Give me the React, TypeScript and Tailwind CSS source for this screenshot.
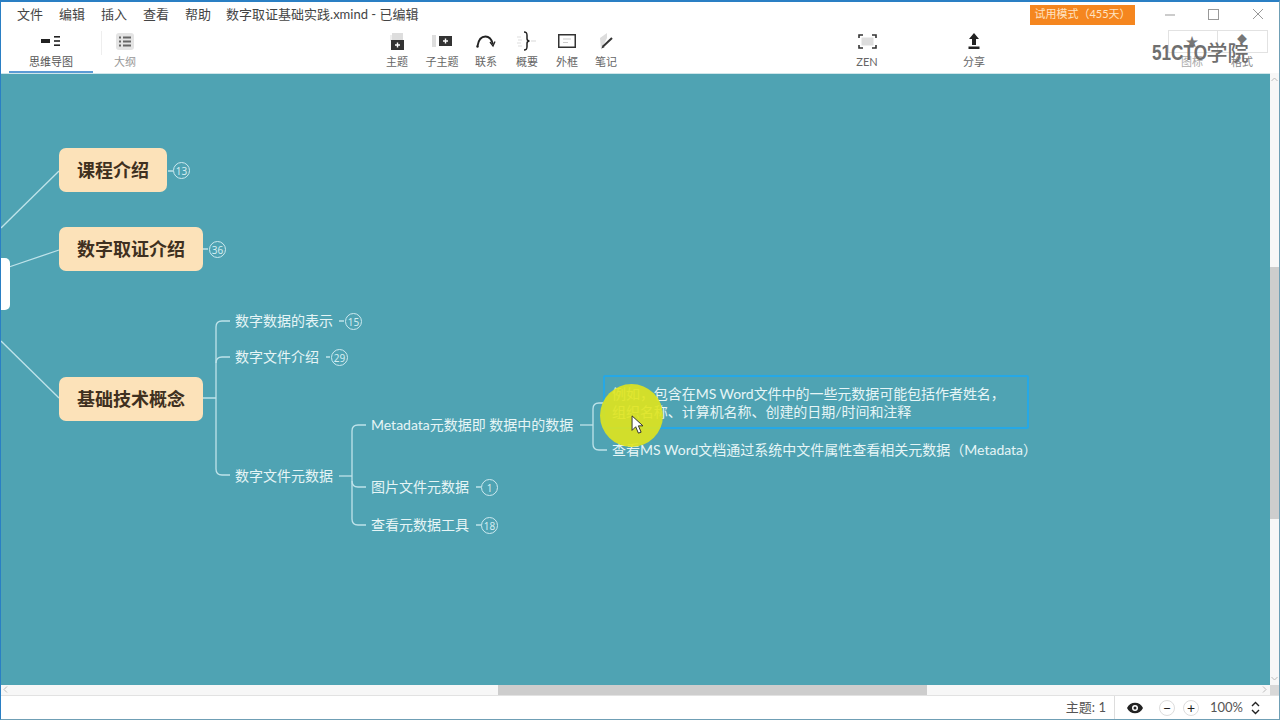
const cjk = "font-['Lato','Noto_Sans_CJK_SC',sans-serif]";

function MindMapIcon() {
  return (
    <svg width="22" height="14" viewBox="0 0 22 14" fill="#222">
      <rect x="1" y="5" width="9" height="4" />
      <rect x="14" y="2" width="6" height="1.6" />
      <rect x="14" y="6.200" width="6" height="1.6" />
      <rect x="14" y="10.400" width="6" height="1.6" />
    </svg>
  );
}

function OutlineIcon() {
  return (
    <svg width="18" height="17" viewBox="0 0 18 17">
      <rect x="0" y="0" width="18" height="17" rx="3" fill="#e4e4e4" />
      <g fill="#666">
        <rect x="3" y="3.500" width="2" height="2" />
        <rect x="7" y="3.500" width="8" height="2" />
        <rect x="3" y="7.500" width="2" height="2" />
        <rect x="7" y="7.500" width="8" height="2" />
        <rect x="3" y="11.500" width="2" height="2" />
        <rect x="7" y="11.500" width="8" height="2" />
      </g>
    </svg>
  );
}

function TopicIcon() {
  return (
    <svg width="14" height="17" viewBox="0 0 14 17">
      <path d="M2 0h11v8H2z" fill="#ddd" />
      <path d="M0 2h2v6H0z" fill="#eee" />
      <rect x="1" y="7" width="13" height="10" fill="#333" />
      <path d="M7.500 9.500v5M5 12h5" stroke="#fff" strokeWidth="1.400" />
    </svg>
  );
}

function SubTopicIcon() {
  return (
    <svg width="20" height="12" viewBox="0 0 20 12">
      <rect x="0" y="0" width="4" height="12" fill="#ddd" />
      <rect x="7" y="1" width="13" height="10" fill="#333" />
      <path d="M13.500 3.500v5M11 6h5" stroke="#fff" strokeWidth="1.400" />
    </svg>
  );
}

function RelationIcon() {
  return (
    <svg width="20" height="13" viewBox="0 0 20 13" fill="none">
      <path d="M1.500 11C2.500 4.500 6 1.500 9.500 1.500s6 2.500 7.500 7.500" stroke="#222" strokeWidth="1.800" />
      <path d="M14 7l3 4 2-4.500" stroke="#222" strokeWidth="1.300" />
      <circle cx="1.500" cy="11.500" r="1.200" fill="#222" />
    </svg>
  );
}

function SummaryIcon() {
  return (
    <svg width="20" height="20" viewBox="0 0 20 20" fill="none">
      <path d="M0 6h4M1 9h4M0 12h4M1 15h4" stroke="#ddd" strokeWidth="1.200" />
      <path d="M7 1c3 0 3 1.500 3 3.500v3c0 1.500 1 2.500 2.500 2.500-1.500 0-2.500 1-2.500 2.500v3c0 2 0 3.500-3 3.500" stroke="#222" strokeWidth="1.500" />
      <path d="M14 10h5" stroke="#ddd" strokeWidth="1.200" />
    </svg>
  );
}

function BoundaryIcon() {
  return (
    <svg width="18" height="14" viewBox="0 0 18 14" fill="none">
      <rect x="0.750" y="0.750" width="16.500" height="12.500" stroke="#333" strokeWidth="1.500" />
      <path d="M5 5h8M5 8.500h5" stroke="#ccc" strokeWidth="1.100" />
    </svg>
  );
}

function NoteIcon() {
  return (
    <svg width="15" height="17" viewBox="0 0 15 17">
      <path d="M1 5l7-5v5L2 17z" fill="#ddd" />
      <path d="M4 13.500L13 5" stroke="#333" strokeWidth="2" />
      <path d="M2.500 15.500l1-3 2 1.800z" fill="#333" />
    </svg>
  );
}

function ZenIcon() {
  return (
    <svg width="19" height="15" viewBox="0 0 19 15" fill="none">
      <rect x="3.500" y="3.500" width="12" height="8" fill="#ddd" />
      <path d="M1 4V1h4M14 1h4v3M1 11v3h4M14 14h4v-3" stroke="#333" strokeWidth="1.600" />
    </svg>
  );
}

function ShareIcon() {
  return (
    <svg width="12" height="16" viewBox="0 0 12 16">
      <path d="M6 0l5 6H8v6H4V6H1z" fill="#222" />
      <rect x="0.500" y="13.500" width="11" height="2.500" fill="#222" />
    </svg>
  );
}

function Chevron({ d, className }: { d: string; className: string }) {
  return (
    <svg className={`absolute ${className}`} width="7" height="7" viewBox="0 0 7 7" fill="none" stroke="#bbb" strokeWidth="1">
      <path d={d} />
    </svg>
  );
}

function ToolButton({ icon, label, className }: { icon: React.ReactNode; label: string; className: string }) {
  return (
    <div className={`flex flex-col items-center pt-[1px] ${className}`}>
      <div className="flex h-[22px] items-center justify-center">{icon}</div>
      <span className="mt-[3px] text-[11px] leading-[14px]">{label}</span>
    </div>
  );
}

function Count({ n, className }: { n: number; className: string }) {
  return (
    <div className={`absolute flex h-[17px] w-[17px] items-center justify-center rounded-full border border-[#cdeaf0] font-['Noto_Sans',sans-serif] text-[10px] leading-none text-[#d6eef2] ${className}`}>
      {n}
    </div>
  );
}

function MainTopic({ label, className }: { label: string; className: string }) {
  return (
    <div className={`absolute flex h-[44px] items-center justify-center rounded-[7px] bg-[#fce2b9] text-[18px] font-bold text-[#3f3020] ${className}`}>
      {label}
    </div>
  );
}

function SubTopic({ label, className }: { label: string; className: string }) {
  return (
    <div className={`absolute whitespace-nowrap text-[14px] leading-[20px] text-[#e6f5f6] ${className}`}>
      {label}
    </div>
  );
}

function MapLines() {
  return (
    <svg className="absolute left-[-1px] top-0" width="1270" height="611" viewBox="0 74 1270 611" fill="none" stroke="#bfe3ea" strokeWidth="1.300">
      <path d="M1 228L59 171" />
      <path d="M9 267L59 250" />
      <path d="M1 341L59 398" />
      <path d="M168 171h5M203 249h5M203 398h13" />
      <path d="M230 321h-8q-6 0-6 6v142q0 6 6 6h8" />
      <path d="M216 363q0-6 6-6h8" />
      <path d="M339 321h5M326 357h4" />
      <path d="M339 476h13" />
      <path d="M366 425h-8q-6 0-6 6v88q0 6 6 6h8" />
      <path d="M352 481q0 6 6 6h8" />
      <path d="M476 487h5M476 525h5" />
      <path d="M580 425h13" />
      <path d="M604 403h-5q-6 0-6 6v35q0 6 6 6h8" />
    </svg>
  );
}

export default function App() {
  return (
    <div className={`flex h-[720px] w-[1280px] flex-col overflow-hidden border border-t-2 border-r-[#6f9fb5] border-b-[#6f9fb5] border-l-[#2a7fc4] border-t-[#2a7fc4] bg-white ${cjk}`}>
      {/* Title row */}
      <div className="relative flex h-[27px] shrink-0 items-center pb-[2px] pl-4 text-[13px] text-[#444]">
        <div className="flex gap-4">
          <span>文件</span>
          <span>编辑</span>
          <span>插入</span>
          <span>查看</span>
          <span>帮助</span>
        </div>
        <span className="ml-[15px]">数字取证基础实践.xmind - 已编辑</span>
        <div className="ml-auto mr-[144px] flex h-[20px] w-[105px] items-center justify-center bg-[#f5861f] text-[11px] text-[#ffe3c2]">
          试用模式（455天）
        </div>
        <svg className="absolute left-[1164px] top-[6px]" width="106" height="14" viewBox="0 0 106 14" fill="none" stroke="#999">
          <path d="M0 7h10" />
          <rect x="43.500" y="1.500" width="10" height="10" />
          <path d="M88 1l10 10M98 1L88 11" />
        </svg>
      </div>

      {/* Toolbar */}
      <div className="relative flex h-[44px] shrink-0 items-start text-[#666]">
        <ToolButton icon={<MindMapIcon />} label="思维导图" className="w-[100px] text-[#555]" />
        <div className="mt-[2px] h-[24px] w-px bg-[#eee]" />
        <ToolButton icon={<OutlineIcon />} label="大纲" className="ml-[-1px] w-[48px] text-[#999]" />
        <ToolButton icon={<TopicIcon />} label="主题" className="ml-[230px] w-[36px]" />
        <ToolButton icon={<SubTopicIcon />} label="子主题" className="ml-[5px] w-[44px]" />
        <ToolButton icon={<RelationIcon />} label="联系" className="ml-[1px] w-[42px]" />
        <ToolButton icon={<SummaryIcon />} label="概要" className="ml-[1px] w-[38px]" />
        <ToolButton icon={<BoundaryIcon />} label="外框" className="ml-[1px] w-[40px]" />
        <ToolButton icon={<NoteIcon />} label="笔记" className="w-[38px]" />
        <ToolButton icon={<ZenIcon />} label="ZEN" className="ml-[222px] w-[40px]" />
        <ToolButton icon={<ShareIcon />} label="分享" className="ml-[67px] w-[40px]" />
        <ToolButton icon={<span className="text-[13px] leading-none text-[#777]">★</span>} label="图标" className="ml-[173px] w-[50px] text-[#aaa]" />
        <ToolButton icon={<span className="mt-[-4px] text-[10px] leading-none text-[#777]">◆</span>} label="格式" className="w-[50px] text-[#888]" />
        <div className="absolute left-[1167px] top-[1px] flex h-[23px] w-[100px] border border-[#e2e2e2]">
          <div className="w-[49px] border-r border-[#e2e2e2]" />
        </div>
        <div className="absolute left-[1151px] top-[12px] whitespace-nowrap text-[21px] leading-[22px] text-[#6f6f6f]">
          <span className="mr-[-16px] inline-block origin-left scale-x-[0.78] font-['Liberation_Sans',sans-serif] text-[22px] font-bold">51CTO</span>
          <span className="font-medium">学院</span>
        </div>
        <div className="absolute bottom-0 left-[8px] h-[2px] w-[84px] bg-[#5b9bd5]" />
      </div>

      {/* Canvas and vertical scrollbar */}
      <div className="flex min-h-0 flex-1">
        <div className="relative flex-1 overflow-hidden border-t border-[#cfe6ea] bg-[#4fa3b3]">
          <MapLines />
          <div className="absolute left-[-8px] top-[184px] h-[52px] w-[17px] rounded-[5px] bg-white" />

          <MainTopic label="课程介绍" className="left-[58px] top-[74px] w-[108px]" />
          <Count n={13} className="left-[172px] top-[88px]" />
          <MainTopic label="数字取证介绍" className="left-[58px] top-[153px] w-[144px]" />
          <Count n={36} className="left-[208px] top-[167px]" />
          <MainTopic label="基础技术概念" className="left-[58px] top-[303px] w-[144px]" />

          <SubTopic label="数字数据的表示" className="left-[234px] top-[237px]" />
          <Count n={15} className="left-[344px] top-[239px]" />
          <SubTopic label="数字文件介绍" className="left-[234px] top-[273px]" />
          <Count n={29} className="left-[330px] top-[275px]" />
          <SubTopic label="数字文件元数据" className="left-[234px] top-[392px]" />

          <SubTopic label="Metadata元数据即 数据中的数据" className="left-[370px] top-[341px]" />
          <SubTopic label="图片文件元数据" className="left-[370px] top-[403px]" />
          <Count n={1} className="left-[480px] top-[405px]" />
          <SubTopic label="查看元数据工具" className="left-[370px] top-[441px]" />
          <Count n={18} className="left-[480px] top-[443px]" />

          <div className="absolute left-[602px] top-[301px] h-[54px] w-[426px] rounded-[2px] border-2 border-[#25a8e6] px-[7px] pt-[8px] text-[14px] leading-[18px] tracking-[-0.05px] text-[#e6f5f6]">
            <div className="whitespace-nowrap">例如，包含在MS Word文件中的一些元数据可能包括作者姓名，</div>
            <div className="whitespace-nowrap">组织名称、计算机名称、创建的日期/时间和注释</div>
          </div>
          <SubTopic label="查看MS Word文档通过系统中文件属性查看相关元数据（Metadata）" className="left-[611px] top-[366px]" />

          {/* Cursor highlight */}
          <div className="absolute left-[599px] top-[310px] h-[63px] w-[63px] rounded-full bg-[#e0e41c]/90" />
          <svg className="absolute left-[630px] top-[341px]" width="13" height="19" viewBox="0 0 14 21">
            <path d="M1 1v16l4-4 3 7 3-1-3-7h5z" fill="#fff" stroke="#222" strokeWidth="1" />
          </svg>
        </div>
        <div className="relative w-[9px] shrink-0 bg-[#f7f7f7]">
          <Chevron d="M0.500 5L3.500 2l3 3" className="left-[1px] top-[3px]" />
          <div className="absolute left-0 top-[194px] h-[252px] w-full bg-[#cdcdcd]" />
          <Chevron d="M0.500 2l3 3 3-3" className="bottom-[3px] left-[1px]" />
        </div>
      </div>

      <div className="relative flex h-[10px] shrink-0 justify-end bg-[#f7f7f7]">
        <Chevron d="M5 0.500L2 3.500l3 3" className="left-[1px] top-[1px]" />
        <div className="absolute left-[497px] top-0 h-full w-[429px] bg-[#cdcdcd]" />
        <Chevron d="M2 0.500l3 3-3 3" className="right-[11px] top-[1px]" />
        <div className="h-full w-[9px] bg-[#d8d8d8]" />
      </div>

      {/* Status bar */}
      <div className="flex h-[24px] shrink-0 items-center justify-end border-t border-[#e2e2e2] pr-[19px] text-[13px] text-[#555]">
        <span className="border-r border-[#ddd] pr-[8px] leading-[23px]">主题: 1</span>
        <svg className="ml-[12px]" width="16" height="12" viewBox="0 0 16 12">
          <path d="M0 6c3-7 13-7 16 0-3 7-13 7-16 0z" fill="#222" />
          <circle cx="8" cy="6" r="3" fill="#fff" />
          <circle cx="8" cy="6" r="1.500" fill="#222" />
        </svg>
        <div className="ml-[16px] flex h-[16px] w-[16px] items-center justify-center rounded-full border border-[#ddd] text-[14px] leading-none text-[#222]">−</div>
        <div className="ml-[8px] flex h-[16px] w-[16px] items-center justify-center rounded-full border border-[#ddd] text-[14px] leading-none text-[#222]">+</div>
        <span className="ml-[11px]">100%</span>
        <svg className="ml-[8px]" width="9" height="14" viewBox="0 0 9 14" fill="none" stroke="#222" strokeWidth="1.400">
          <path d="M1 5l3.500-3.500L8 5M1 9l3.500 3.500L8 9" />
        </svg>
      </div>
    </div>
  );
}
